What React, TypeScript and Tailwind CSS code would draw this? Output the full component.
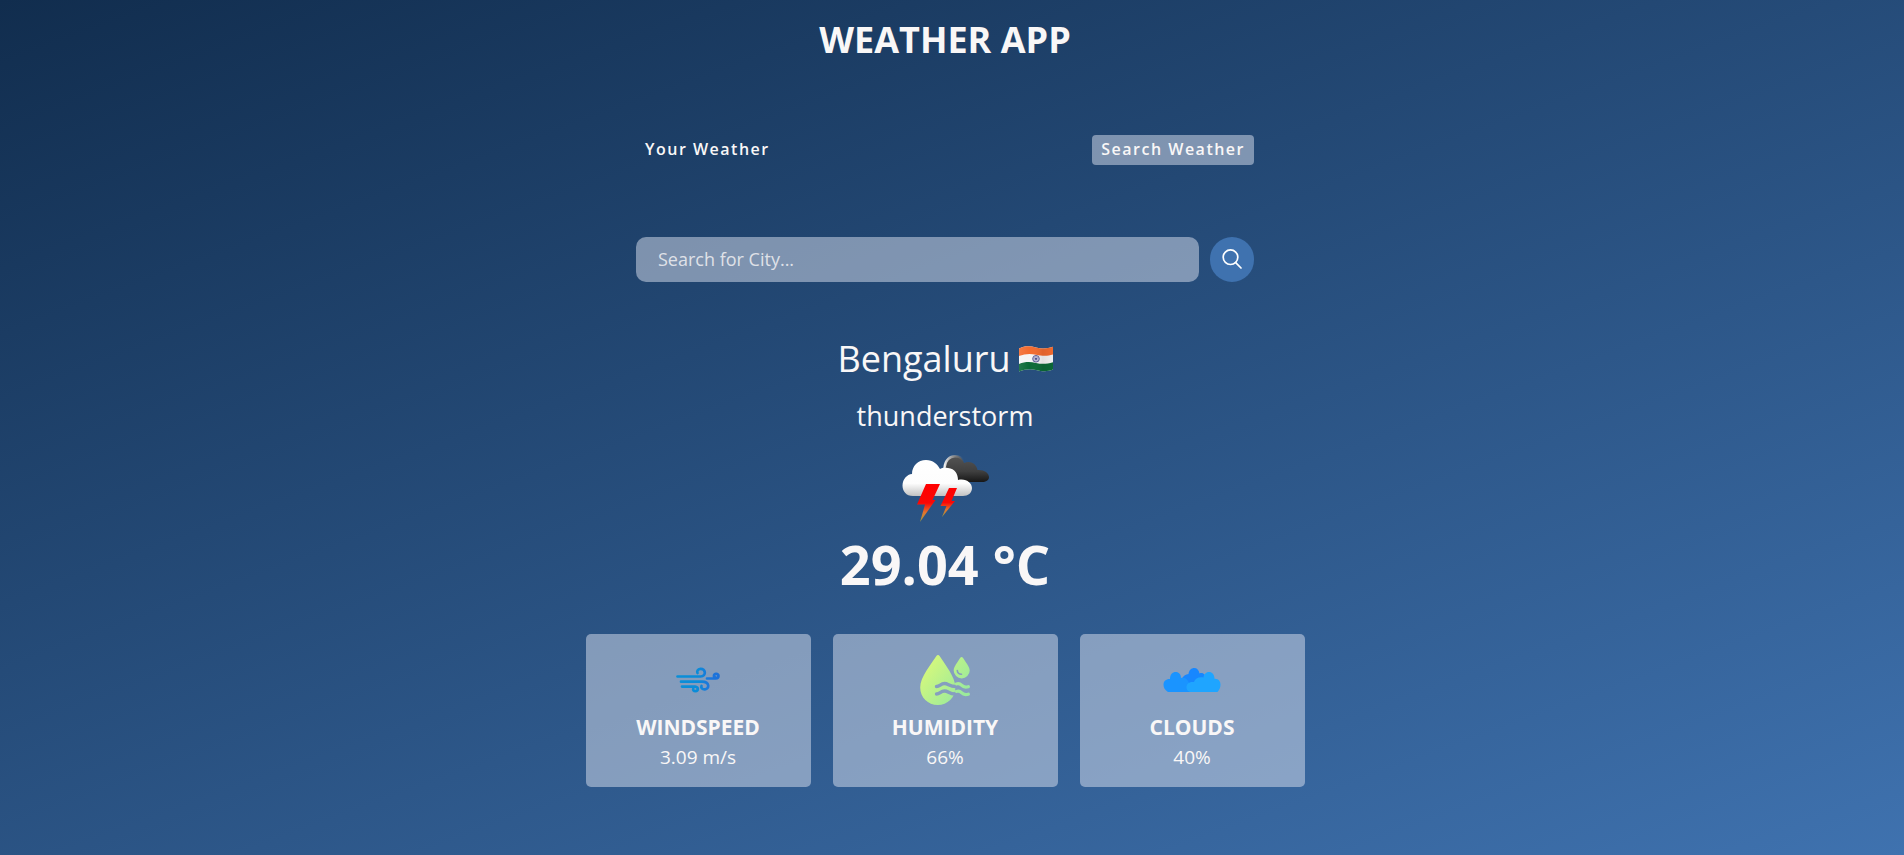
import type { FormEvent, ReactNode } from "react";

function IndiaFlag() {
  return (
    <svg viewBox="0 0 34 26" className="h-[26px] w-[34px]" role="img" aria-label="India">
      <defs>
        <clipPath id="flag-wave">
          <path d="M0 2.400C6-.4 11-.2 17 1.400S28 2.600 34 .8V23.600C28 26 23 25.400 17 24S6 23.400 0 25.600Z" />
        </clipPath>
        <linearGradient id="flag-shade" x1="0" y1="0" x2="1" y2="0">
          <stop offset="0" stopColor="#fff" stopOpacity="0.1" />
          <stop offset="0.3" stopColor="#fff" stopOpacity="0" />
          <stop offset="0.7" stopColor="#000" stopOpacity="0.08" />
          <stop offset="1" stopColor="#000" stopOpacity="0.02" />
        </linearGradient>
      </defs>
      <g clipPath="url(#flag-wave)">
        <rect width="34" height="26" fill="#f5f5f5" />
        <path d="M0 0H34V8.500C28 10.500 23 10 17 8.700S6 7.800 0 10Z" fill="#f36c30" />
        <path d="M0 18C6 15.600 11 15.600 17 17S28 18 34 16.200V26H0Z" fill="#0b6a37" />
        <rect width="34" height="26" fill="url(#flag-shade)" />
      </g>
      <circle cx="17" cy="12.800" r="3.300" fill="#d5d5e3" stroke="#5c5a96" strokeWidth="1" />
      <path d="M17 9.800v6M14 12.800h6M14.900 10.700l4.200 4.200M19.100 10.700l-4.200 4.200" stroke="#6f6da4" strokeWidth="0.500" />
      <circle cx="17" cy="12.800" r="0.900" fill="#3d3a83" />
    </svg>
  );
}

function ThunderstormIcon() {
  return (
    <svg viewBox="0 0 130 90" className="h-[90px] w-[130px]" aria-hidden="true">
      <defs>
        <linearGradient id="dark-cloud" x1="0" y1="0" x2="0" y2="1">
          <stop offset="0" stopColor="#555" />
          <stop offset="0.6" stopColor="#3f3f3f" />
          <stop offset="1" stopColor="#171717" />
        </linearGradient>
        <linearGradient id="white-cloud" x1="0" y1="0" x2="0" y2="1">
          <stop offset="0" stopColor="#fff" />
          <stop offset="0.65" stopColor="#fdfdfd" />
          <stop offset="1" stopColor="#c2c2c2" />
        </linearGradient>
        <linearGradient id="bolt" x1="0" y1="0" x2="0" y2="1">
          <stop offset="0" stopColor="#ff0000" />
          <stop offset="0.5" stopColor="#fb0705" />
          <stop offset="0.75" stopColor="#e0752f" />
          <stop offset="1" stopColor="#9a9a40" />
        </linearGradient>
        <linearGradient id="rim" x1="0" y1="0" x2="1" y2="0">
          <stop offset="0" stopColor="#eee" />
          <stop offset="1" stopColor="#888" stopOpacity="0" />
        </linearGradient>
      </defs>
      <path d="M64 29C64 20 69 15.500 75 15.500C79.500 15.500 82.500 18.500 84 23C90 20.500 96 23 97.500 30C104 29.500 109 33 109 37C109 40.500 106 42 102 42H78Z" fill="url(#dark-cloud)" />
      <path d="M64.500 28C65 20 70 16.200 75 16.200C79 16.200 82 18 84 21" fill="none" stroke="url(#rim)" strokeWidth="2.400" />
      <path d="M33 56C26 56 22.500 51 22.500 45.500C22.500 39 27 34.500 32 34C32 26 38 20 46 20C53 20 57.500 24 60 29C62 27.500 65 27.500 68 28C75 28.500 78 34 78 40C86 38 92 43 92 48C92 53 88 56 83 56Z" fill="url(#white-cloud)" />
      <path d="M46 44H60L52.500 60H55.500L40 82L45 64.500H37Z" fill="url(#bolt)" />
      <path d="M69 48H77L71.500 61H75L62 77L66.500 66H60.500Z" fill="url(#bolt)" />
    </svg>
  );
}

function WindIcon() {
  return (
    <svg viewBox="0 0 50 50" className="h-[50px] w-[50px]" fill="none" strokeWidth="2.700" strokeLinecap="round" aria-hidden="true">
      <defs>
        <linearGradient id="wind-blue" gradientUnits="userSpaceOnUse" x1="4" y1="0" x2="47" y2="0">
          <stop offset="0" stopColor="#0a8fd8" />
          <stop offset="0.5" stopColor="#0a8bd8" />
          <stop offset="0.72" stopColor="#1c78dc" />
          <stop offset="1" stopColor="#1c6fda" />
        </linearGradient>
      </defs>
      <g stroke="url(#wind-blue)">
        <path d="M4.500 21.500H27.500C34 21 32.500 13.500 27.500 13.800C24.500 14 23.800 16.500 24.500 18" />
        <path d="M34 23.500H42.500C46.700 23.100 46.100 18.700 43.100 18.900C40.300 19.200 40.500 22 42.300 22.300" />
        <path d="M8 26.700H29C37 26.700 36.500 34 32 34.300C29 34.500 27.800 32.500 28.500 31" />
        <path d="M9 31.600H22C26 32 25.300 36.200 22.500 36.200C20.500 36.200 19.800 34.900 20.300 34" />
      </g>
    </svg>
  );
}

function HumidityIcon() {
  return (
    <svg viewBox="0 0 50 50" className="h-[50px] w-[50px]" aria-hidden="true">
      <defs>
        <linearGradient id="humid" gradientUnits="userSpaceOnUse" x1="4" y1="12" x2="42" y2="40">
          <stop offset="0" stopColor="#d5f87c" />
          <stop offset="1" stopColor="#9bea9b" />
        </linearGradient>
        <mask id="humid-cut" maskUnits="userSpaceOnUse" x="0" y="0" width="50" height="50">
          <rect width="50" height="50" fill="#fff" />
          <circle cx="41.500" cy="15.300" r="10" fill="#000" />
          <path d="M16.500 31.500C20 31.500 20.500 28.500 24.500 28.500S29 31.500 36 31.500M16.500 39C20 39 20.500 36 24.500 36S29 39 35 39" fill="none" stroke="#000" strokeWidth="3.400" strokeLinecap="round" />
        </mask>
      </defs>
      <path mask="url(#humid-cut)" d="M16.400 1C17.200-.3 18.800-.3 19.600 1C25 9.500 35.400 22 35.400 32.500C35.400 42.500 27.500 50 17.800 50S.2 42.500.2 32.500C.2 22 11 9.500 16.400 1Z" fill="url(#humid)" />
      <path d="M40.300 2.700C41 1.600 42.200 1.600 42.900 2.700C45.500 7 49.700 11.500 49.700 15.600A8 7.800 0 0 1 33.700 15.600C33.700 11.500 37.700 7 40.300 2.700Z" fill="url(#humid)" />
      <path d="M37.300 15.500C37.500 18 39 19.200 41.500 19.300" fill="none" stroke="#869dbf" strokeWidth="1.600" strokeLinecap="round" />
      <path d="M36.500 28.900C38.500 28 40 28.600 41.500 30.200S45.500 32.500 48.300 31.700M36.500 36.400C38.500 35.500 40 36.100 41.500 37.700S45.500 40 48.300 39.200" fill="none" stroke="url(#humid)" strokeWidth="3.200" strokeLinecap="round" />
    </svg>
  );
}

function CloudsIcon() {
  return (
    <svg viewBox="0 0 58 50" className="h-[50px] w-[58px]" aria-hidden="true">
      <path d="M18 32C17 25 20 19.500 25.500 19C26 15 28.500 13 31.200 13S36 15 36.500 18.500C40 17 43 20 43 24L40 32Z" fill="#1787ff" />
      <path d="M5 37C1.500 35 .5 32 .5 29.500C.5 26 3.500 23.600 7 24C7 19.500 9.500 17 12.700 17S18 19.500 18 23C22 21.500 26 25 27 31V37Z" fill="#1a94ff" />
      <path d="M27 37C24 36 23.500 34 23.500 32C23.500 28.500 27 26.500 31 27C32 23.500 36 21.500 40.500 22.500C40.500 19.500 43 17 46 17S51.500 19.500 51.500 23.800C55.500 23.500 57.500 26.500 57.500 29.500C57.500 32 56.500 35 54.500 37Z" fill="#1fa5ff" />
    </svg>
  );
}

function ParameterCard({ icon, name, value }: { icon: ReactNode; name: string; value: string }) {
  return (
    <article className="flex w-[225px] flex-col items-center rounded-[5px] bg-[#dbe2ef]/50 px-4 pt-5 pb-4">
      <div className="flex h-[52px] items-center">{icon}</div>
      <p className="mt-[7px] text-[21px] leading-7 font-bold uppercase">{name}</p>
      <p className="mt-[2px] text-[19px] leading-7">{value}</p>
    </article>
  );
}

export default function App() {
  const onSearch = (event: FormEvent) => event.preventDefault();

  return (
    <div className="min-h-screen bg-[linear-gradient(160deg,#112d4e_0%,#3f72af_100%)] pr-[14px] font-['Open_Sans','Noto_Sans',sans-serif] text-[#f9f7f7]">
      <h1 className="pt-5 text-center text-[36px] leading-10 font-bold">WEATHER APP</h1>

      <div className="mx-auto mt-[75px] w-full max-w-[618px]">
        <nav className="flex justify-between">
          <button type="button" className="h-[30px] cursor-pointer rounded-[4px] px-[9px] pb-[2px] text-[16px] font-semibold tracking-[1.5px]">
            Your Weather
          </button>
          <button type="button" className="h-[30px] cursor-pointer rounded-[4px] bg-[#dbe2ef]/50 px-[9px] pb-[2px] text-[16px] font-semibold tracking-[1.5px]">
            Search Weather
          </button>
        </nav>

        <form onSubmit={onSearch} className="mt-[72px] flex items-center gap-[11px]">
          <input
            type="text"
            aria-label="Search for City"
            placeholder="Search for City..."
            className="h-[45px] min-w-0 flex-1 rounded-[10px] bg-[#dbe2ef]/50 px-[22px] pb-[2px] text-[18px] outline-none placeholder:text-[#f9f7f7]/80"
          />
          <button type="submit" aria-label="Search" className="flex h-[45px] w-[44px] cursor-pointer items-center justify-center rounded-full bg-[#3f72af] pb-[2px]">
            <svg viewBox="0 0 20 20" className="h-5 w-5" fill="none" stroke="#fff" strokeWidth="1.700" strokeLinecap="round" aria-hidden="true">
              <circle cx="8.500" cy="8.200" r="7.300" />
              <path d="M13.700 13.600L19 19" />
            </svg>
          </button>
        </form>
      </div>

      <main className="flex flex-col items-center">
        <div className="mt-[53px] flex items-center gap-2">
          <h2 className="text-[36px] leading-[48px] font-normal">Bengaluru</h2>
          <IndiaFlag />
        </div>
        <p className="mt-[15px] text-[27px] leading-9 font-normal">thunderstorm</p>
        <div className="mt-[6px]">
          <ThunderstormIcon />
        </div>
        <p className="mt-1 text-[54px] leading-[60px] font-bold">29.04 °C</p>

        <section aria-label="Weather details" className="mt-10 flex flex-wrap justify-center gap-[22px]">
          <ParameterCard icon={<WindIcon />} name="Windspeed" value="3.09 m/s" />
          <ParameterCard icon={<HumidityIcon />} name="Humidity" value="66%" />
          <ParameterCard icon={<CloudsIcon />} name="Clouds" value="40%" />
        </section>
      </main>
    </div>
  );
}
